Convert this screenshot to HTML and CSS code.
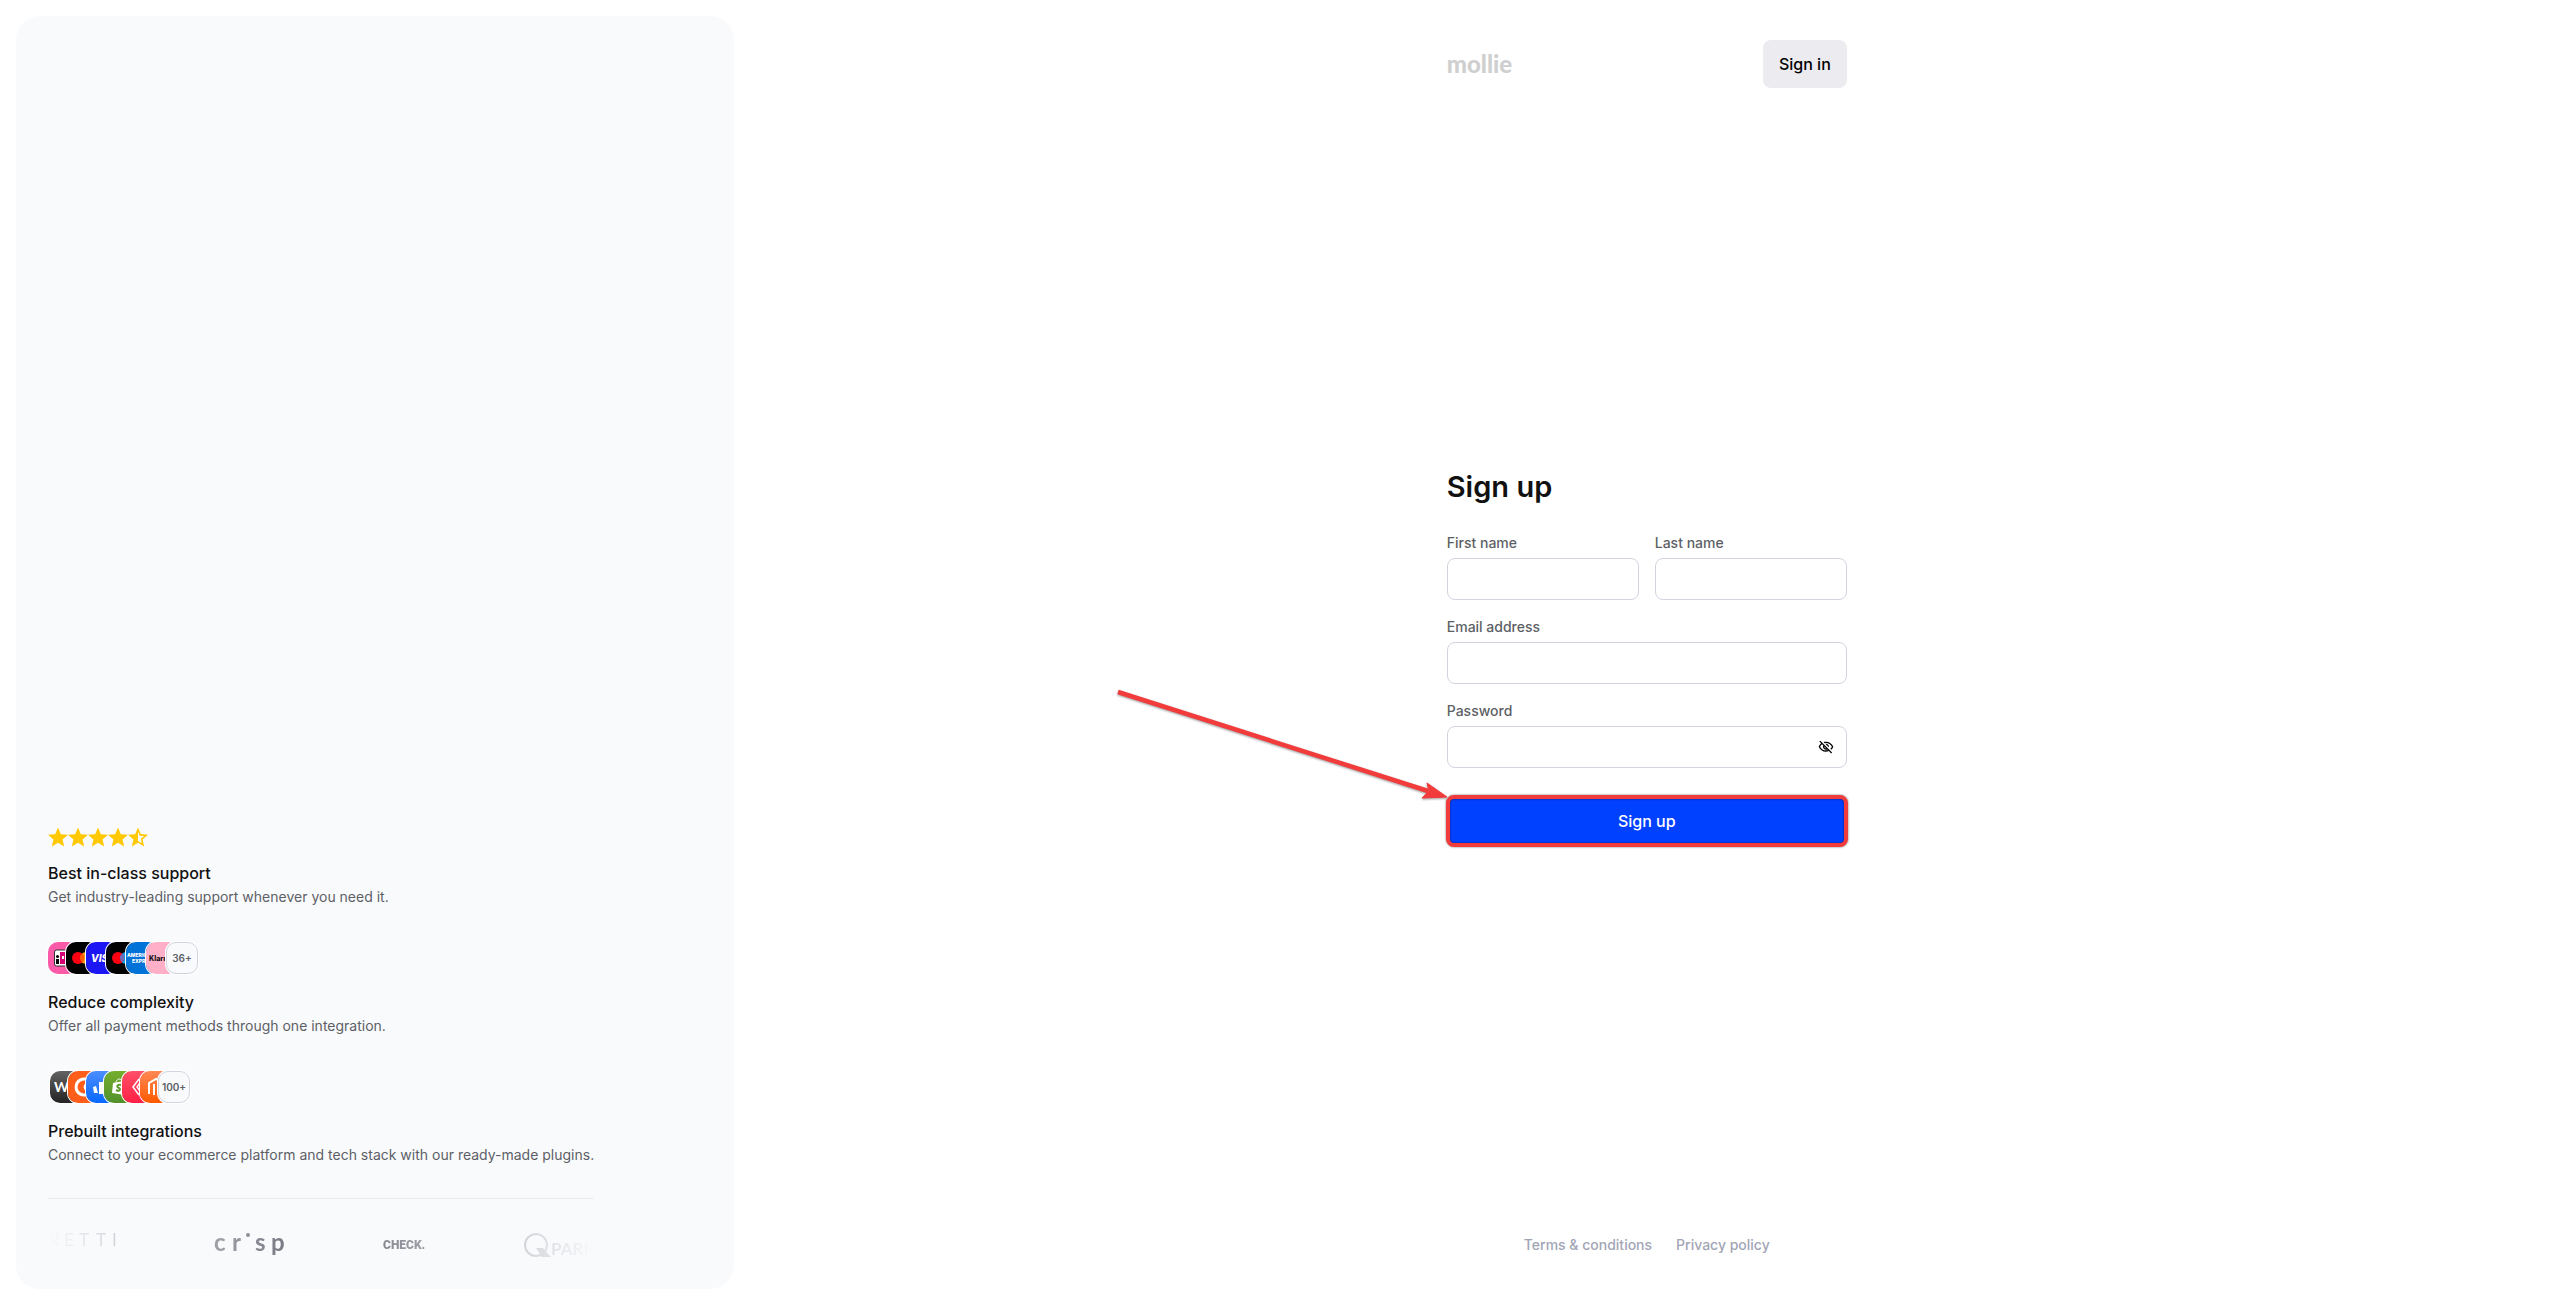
FILE: index.html
```html
<!DOCTYPE html>
<html lang="en">
<head>
  <meta charset="UTF-8">
  <meta name="viewport" content="width=device-width, initial-scale=1.0">
  <title>Sign up | Mollie</title>
  <link rel="stylesheet" href="styles.css">
</head>
<body>
  <div class="page">

    <aside class="panel">
      <div class="highlights">
        <section class="highlight">
          <div class="stars">
            <svg viewBox="2 1.5 20 20"><path d="M12 17.270L18.180 21l-1.640-7.030L22 9.240l-7.190-.61L12 2 9.190 8.630 2 9.240l5.460 4.730L5.820 21z"/></svg>
            <svg viewBox="2 1.5 20 20"><path d="M12 17.270L18.180 21l-1.640-7.030L22 9.240l-7.190-.61L12 2 9.190 8.630 2 9.240l5.460 4.730L5.820 21z"/></svg>
            <svg viewBox="2 1.5 20 20"><path d="M12 17.270L18.180 21l-1.640-7.030L22 9.240l-7.190-.61L12 2 9.190 8.630 2 9.240l5.460 4.730L5.820 21z"/></svg>
            <svg viewBox="2 1.5 20 20"><path d="M12 17.270L18.180 21l-1.640-7.030L22 9.240l-7.190-.61L12 2 9.190 8.630 2 9.240l5.460 4.730L5.820 21z"/></svg>
            <svg viewBox="2 1.5 20 20"><path d="M22 9.240l-7.190-.62L12 2 9.190 8.630 2 9.240l5.460 4.730L5.820 21 12 17.270 18.180 21l-1.630-7.030L22 9.240zM12 15.400V6.100l1.710 4.040 4.380.38-3.320 2.880 1 4.280L12 15.400z"/></svg>
          </div>
          <h2>Best in-class support</h2>
          <p>Get industry-leading support whenever you need it.</p>
        </section>

        <section class="highlight">
          <div class="tiles tiles-payment">
            <svg class="tile" viewBox="0 0 30 32">
              <rect width="30" height="32" fill="#fa5aa8"/>
              <rect x="6.5" y="8" width="20" height="16" rx="2" fill="#fff" stroke="#333"/>
              <path d="M12 10h6c5 0 7 3 7 6s-2 6-7 6h-6z" fill="#d50172"/>
              <circle cx="9.5" cy="14.5" r="1.5"/>
              <path d="M8 17h3v5H8z"/>
              <path d="M14 14v3h2v-3z" fill="#fff"/>
            </svg>
            <svg class="tile" viewBox="0 0 32 32">
              <rect width="32" height="32"/>
              <circle cx="20" cy="16" r="6" fill="#f79e1b"/>
              <circle cx="12" cy="16" r="6" fill="#ff0010"/>
              <path d="M16 11.500a6 6 0 0 1 0 9 6 6 0 0 1 0-9z" fill="#ff5f00"/>
            </svg>
            <svg class="tile" viewBox="0 0 32 32">
              <rect width="32" height="32" fill="#1c16f5"/>
              <text x="5" y="20" class="mark mark-visa">VISA</text>
            </svg>
            <svg class="tile" viewBox="0 0 32 32">
              <rect width="32" height="32"/>
              <circle cx="20" cy="16" r="6" fill="#1a9ae0"/>
              <circle cx="12" cy="16" r="6" fill="#ff0010"/>
              <path d="M16 11.500a6 6 0 0 1 0 9 6 6 0 0 1 0-9z" fill="#6c6bbd"/>
            </svg>
            <svg class="tile" viewBox="0 0 32 32">
              <rect width="32" height="32" fill="#0072d8"/>
              <text x="1" y="15" class="mark mark-amex">AMERICAN</text>
              <text x="6" y="21" class="mark mark-amex">EXPRESS</text>
            </svg>
            <svg class="tile" viewBox="0 0 32 32">
              <rect width="32" height="32" fill="#ffb0c8"/>
              <text x="3" y="19" class="mark mark-klarna">Klarna</text>
            </svg>
            <span class="tile tile-more">36+</span>
          </div>
          <h2>Reduce complexity</h2>
          <p>Offer all payment methods through one integration.</p>
        </section>

        <section class="highlight">
          <div class="tiles tiles-plugins">
            <svg class="tile" viewBox="0 0 32 32">
              <defs>
                <linearGradient id="dark" x2="0" y2="1"><stop stop-color="#626262"/><stop offset="1" stop-color="#242424"/></linearGradient>
                <linearGradient id="blue" x2="0" y2="1"><stop stop-color="#4b8dff"/><stop offset="1" stop-color="#0868ff"/></linearGradient>
                <linearGradient id="green" x2="0" y2="1"><stop stop-color="#74ae2c"/><stop offset="1" stop-color="#52902c"/></linearGradient>
                <linearGradient id="red" x2="0" y2="1"><stop stop-color="#ff5068"/><stop offset="1" stop-color="#ff2046"/></linearGradient>
                <linearGradient id="orange" x2="0" y2="1"><stop stop-color="#ff8855"/><stop offset="1" stop-color="#ff5a00"/></linearGradient>
              </defs>
              <rect width="32" height="32" fill="url(#dark)"/>
              <text x="4" y="21" class="mark mark-woo">W</text>
            </svg>
            <svg class="tile" viewBox="0 0 32 32">
              <rect width="32" height="32" fill="#ff5e1a"/>
              <path d="M20 9a8 8 0 1 0 0 14" fill="none" stroke="#fff" stroke-width="3"/>
              <path d="M18 12a4.500 4.500 0 0 0 0 8z" fill="#fff"/>
            </svg>
            <svg class="tile" viewBox="0 0 32 32">
              <rect width="32" height="32" fill="url(#blue)"/>
              <path d="M7 16l3-1 2 7h-4zM13 11h6v12h-6z" fill="#fff"/>
            </svg>
            <svg class="tile" viewBox="0 0 32 32">
              <rect width="32" height="32" fill="url(#green)"/>
              <path d="M9 12l11-2 1 14-13-2z" fill="#fff"/>
              <path d="M12 12c0-4 5-6 6-1" fill="none" stroke="#fff"/>
              <path d="M17 14c-4-1-5 2-2 3 2 1 1 4-3 2" fill="none" stroke="#5f9b2c" stroke-width="2"/>
            </svg>
            <svg class="tile" viewBox="0 0 32 32">
              <rect width="32" height="32" fill="url(#red)"/>
              <path d="M17 8l-6 8 6 8M18 12l-3 4 3 4" fill="none" stroke="#fff" stroke-width="1.5"/>
            </svg>
            <svg class="tile" viewBox="0 0 32 32">
              <rect width="32" height="32" fill="url(#orange)"/>
              <path d="M9 23V12l7-4 7 4v11M14 24V13" fill="none" stroke="#fff" stroke-width="2"/>
            </svg>
            <span class="tile tile-more">100+</span>
          </div>
          <h2>Prebuilt integrations</h2>
          <p>Connect to your ecommerce platform and tech stack with our ready-made plugins.</p>
        </section>

        <div class="customers">
          <div class="customers-list">
            <svg width="68" height="24" viewBox="0 0 68 24">
              <text class="logo-retti" x="1 16 31 48 64" y="13">RETTI</text>
            </svg>
            <svg width="72" height="24" viewBox="0 0 72 24">
              <text class="logo-crisp" x="0 18 41 57" y="18">crsp</text>
              <circle cx="34" cy="2" r="2"/>
            </svg>
            <svg width="43" height="24" viewBox="0 0 43 24">
              <text class="logo-check" x="0" y="16">CHECK.</text>
            </svg>
            <svg width="70" height="24" viewBox="0 0 70 24">
              <circle cx="12" cy="12" r="11" fill="none" stroke="#676773" stroke-width="2"/>
              <path d="M12 15h7l8 9h-9z"/>
              <text class="logo-qpark" x="27" y="22">PARK</text>
            </svg>
          </div>
        </div>
      </div>
    </aside>

    <div class="content">
      <header class="topbar">
        <a href="#" class="logo">mollie</a>
        <button type="button" class="btn btn-light">Sign in</button>
      </header>

      <main class="main">
        <form class="signup">
          <h1>Sign up</h1>
          <div class="row">
            <div class="field">
              <label for="first-name">First name</label>
              <input id="first-name" type="text">
            </div>
            <div class="field">
              <label for="last-name">Last name</label>
              <input id="last-name" type="text">
            </div>
          </div>
          <div class="field">
            <label for="email">Email address</label>
            <input id="email" type="email">
          </div>
          <div class="field">
            <label for="password">Password</label>
            <div class="password">
              <input id="password" type="password">
              <button type="button" class="toggle" aria-label="Show password">
                <svg viewBox="0 0 24 24"><path d="M12 6c3.790 0 7.170 2.130 8.820 5.500-.59 1.220-1.420 2.270-2.410 3.120l1.410 1.410c1.390-1.230 2.490-2.770 3.180-4.530C21.270 7.110 17 4 12 4c-1.270 0-2.490.2-3.640.57l1.650 1.650C10.660 6.090 11.320 6 12 6zm-1.070 1.140L13 9.210c.57.25 1.030.71 1.280 1.280l2.070 2.070c.08-.34.14-.7.14-1.070C16.500 9.010 14.480 7 12 7c-.37 0-.72.05-1.070.14zM2.010 3.870l2.680 2.680C3.060 7.830 1.770 9.530 1 11.500 2.730 15.890 7 19 12 19c1.520 0 2.980-.29 4.320-.82l3.420 3.420 1.410-1.410L3.420 2.450 2.010 3.870zm7.500 7.500l2.610 2.610c-.04.01-.08.02-.12.02-1.380 0-2.500-1.120-2.500-2.500 0-.05.01-.08.01-.13zm-3.400-3.400l1.750 1.750c-.23.55-.36 1.150-.36 1.780 0 2.480 2.020 4.500 4.500 4.500.63 0 1.230-.13 1.770-.36l.98.98c-.88.24-1.800.38-2.750.38-3.790 0-7.170-2.130-8.820-5.500.7-1.430 1.720-2.610 2.930-3.530z"/></svg>
              </button>
            </div>
          </div>
          <div class="submit">
            <button type="submit" class="btn btn-primary">Sign up</button>
            <svg class="arrow" width="340" height="120" viewBox="0 0 340 120">
              <path d="M9 13l310 99" fill="none" stroke="#f23b3b" stroke-width="4.500"/>
              <path d="M338 118l-20-14 2 8-7 7z" fill="#f23b3b" stroke="#f23b3b"/>
            </svg>
          </div>
        </form>
      </main>

      <footer class="footer">
        <a href="#">Terms &amp; conditions</a>
        <a href="#">Privacy policy</a>
      </footer>
    </div>

  </div>
</body>
</html>
```
FILE: styles.css
```css
* {
  box-sizing: border-box;
}

body {
  margin: 0;
  font-family: Inter, "Liberation Sans", sans-serif;
  background-color: #fff;
  color: #111;
}

h1, h2, p {
  margin: 0;
}

svg {
  display: block;
}

.page {
  display: grid;
  grid-template-columns: 11fr 28fr;
  min-height: 100vh;
  padding-left: 16px;
}

/* Left panel */
.panel {
  display: flex;
  align-items: flex-end;
  margin: 16px 0;
  padding: 32px;
  background-color: #f9fafc;
  border-radius: 24px;
}

.highlight {
  margin-bottom: 33px;
}

.highlight:nth-child(3) {
  margin-bottom: 31px;
}

.highlight h2 {
  font-size: 16px;
  font-weight: 500;
  line-height: 24px;
}

.highlight p {
  font-size: 14px;
  line-height: 24px;
  color: #5d5f66;
}

.stars {
  display: flex;
  margin-bottom: 14px;
}

.stars svg {
  width: 20px;
  height: 20px;
  fill: #ffc800;
}

.tiles {
  display: flex;
  margin-bottom: 16px;
}

.tiles-plugins {
  padding-left: 2px;
}

.tile {
  width: 32px;
  height: 32px;
  border-radius: 10px;
  box-shadow: 0 0 0 1px #fff;
}

.tiles-payment .tile:first-child {
  width: 30px;
}

.tiles-payment .tile + .tile {
  margin-left: -12px;
}

.tiles-plugins .tile + .tile {
  margin-left: -14px;
}

.tile-more {
  display: flex;
  align-items: center;
  justify-content: center;
  background-color: #f9fafc;
  border: 1px solid #d3d3e0;
  color: #5d5f66;
  font-size: 10px;
  font-weight: 600;
}

.mark {
  font-weight: 800;
  fill: #fff;
}

.mark-visa {
  font-size: 10px;
  font-style: italic;
}

.mark-amex {
  font-size: 5px;
}

.mark-klarna {
  font-size: 7px;
  fill: #111;
}

.mark-woo {
  font-family: Lato, sans-serif;
  font-size: 14px;
  font-weight: 700;
}

.customers {
  padding-top: 34px;
  border-top: 1px solid #ebebee;
}

.customers-list {
  display: flex;
  justify-content: space-between;
  fill: #676773;
  -webkit-mask-image: linear-gradient(90deg, transparent, #000 50%, transparent);
  mask-image: linear-gradient(90deg, transparent, #000 50%, transparent);
}

.customers svg {
  overflow: visible;
}

.customers text {
  font-family: Lato, sans-serif;
}

.logo-retti {
  font-size: 17px;
}

.logo-crisp {
  font-size: 24px;
  font-weight: 700;
}

.customers .logo-check {
  font-family: Roboto, sans-serif;
  font-size: 12px;
  font-weight: 900;
}

.logo-qpark {
  font-size: 17px;
  font-weight: 700;
}

/* Right side */
.content {
  display: flex;
  flex-direction: column;
  align-items: center;
  padding: 40px 24px 48px;
}

.topbar,
.signup {
  width: 100%;
  max-width: 400px;
}

.topbar {
  display: flex;
  align-items: center;
  justify-content: space-between;
}

.logo {
  font-family: Lato, sans-serif;
  font-size: 24px;
  font-weight: 900;
  line-height: 32px;
  color: #cfcfcf;
  text-decoration: none;
}

.btn {
  height: 48px;
  padding: 0 16px;
  border: none;
  border-radius: 8px;
  font-family: inherit;
  font-size: 16px;
  font-weight: 500;
  cursor: pointer;
}

.btn-light {
  background-color: #ebebf0;
  color: #000;
}

.btn-primary {
  display: block;
  width: 100%;
  background-color: #0040ff;
  color: #fff;
}

.main {
  flex: 1;
  display: flex;
  align-items: center;
  justify-content: center;
  width: 100%;
}

.signup {
  display: flex;
  flex-direction: column;
  gap: 16px;
}

.signup h1 {
  margin-bottom: 7px;
  font-size: 29px;
  font-weight: 600;
  line-height: 44px;
}

.row {
  display: flex;
  gap: 16px;
}

.row .field {
  flex: 1;
}

.field label {
  display: block;
  margin-bottom: 4px;
  font-size: 14px;
  font-weight: 500;
  line-height: 22px;
  color: #5d5f66;
}

.field input {
  display: block;
  width: 100%;
  height: 42px;
  padding: 0 12px;
  border: 1px solid #d3d3e0;
  border-radius: 8px;
  background-color: #fff;
  font-family: inherit;
  font-size: 16px;
}

.password {
  position: relative;
}

.toggle {
  position: absolute;
  top: 5px;
  right: 5px;
  padding: 8px;
  border: none;
  background: none;
  cursor: pointer;
}

.toggle svg {
  width: 16px;
  height: 16px;
}

.submit {
  position: relative;
  margin-top: 13px;
}

/* Marker around the submit button */
.submit::after {
  content: "";
  position: absolute;
  inset: -2px -1px;
  border: 4px solid #f23b3b;
  border-radius: 8px;
  filter: drop-shadow(0 0 1px rgba(0, 0, 0, 0.5));
  pointer-events: none;
}

.arrow {
  position: absolute;
  right: 100%;
  bottom: 100%;
  margin: 0 -2px -2px 0;
  filter: drop-shadow(0 1px 1px rgba(0, 0, 0, 0.4));
  pointer-events: none;
}

.footer {
  display: flex;
  gap: 24px;
  padding-top: 11px;
}

.footer a {
  font-size: 14px;
  font-weight: 500;
  line-height: 24px;
  color: #a2a5b5;
  text-decoration: none;
}
```
